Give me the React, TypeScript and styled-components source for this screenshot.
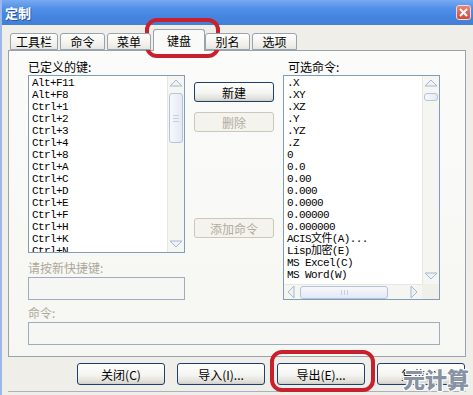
import React from 'react';
import styled, { createGlobalStyle } from 'styled-components';

const GlobalStyle = createGlobalStyle`
  html, body {
    margin: 0;
    padding: 0;
    background: #fff;
  }
  * {
    box-sizing: border-box;
  }
`;

const Window = styled.div`
  position: relative;
  width: 473px;
  height: 395px;
  overflow: hidden;
  display: flex;
  flex-direction: column;
  background: #efeee8;
  border-left: 2px solid #9cb8e8;
  font-family: "Noto Sans CJK SC", "Liberation Sans", sans-serif;
  font-size: 12px;
  color: #000;
`;

const TitleBar = styled.div`
  height: 25px;
  margin-left: -2px;
  flex: none;
  display: flex;
  align-items: center;
  justify-content: space-between;
  padding: 0 2px 0 5px;
  background: linear-gradient(to bottom, #78aaf0 0%, #4f8fe8 35%, #4484e0 70%, #427fd6 100%);
  color: #fff;
  font-weight: 700;
  font-size: 13px;
  text-shadow: 1px 1px 0 #2a5aa8;
`;

const CloseBox = styled.div`
  width: 15px;
  height: 15px;
  border: 1px solid #f3d8d4;
  border-radius: 3px;
  background: linear-gradient(to bottom, #e9857a, #cf4a3c);
  display: flex;
  align-items: center;
  justify-content: center;
`;

const Body = styled.div`
  flex: 1;
  display: flex;
  flex-direction: column;
  padding: 0 7px 0 6px;
`;

const TabRow = styled.div`
  height: 25px;
  display: flex;
  align-items: flex-end;
  gap: 2px;
  padding-left: 2px;
  position: relative;
  z-index: 1;
`;

const Tab = styled.div<{ $w: number; $active?: boolean }>`
  width: ${p => p.$w}px;
  height: ${p => (p.$active ? 22 : 17)}px;
  margin-right: ${p => (p.$active ? -2 : 0)}px;
  margin-bottom: ${p => (p.$active ? -1 : 0)}px;
  display: flex;
  align-items: center;
  justify-content: center;
  border: 1px solid #98a3ae;
  border-bottom: ${p => (p.$active ? 'none' : '1px solid #98a3ae')};
  border-radius: 3px 3px 0 0;
  background: ${p =>
    p.$active ? '#fafaf8' : 'linear-gradient(to bottom, #ffffff, #f1f0ec 70%, #e6e5df)'};
  font-size: 12px;
  line-height: 1;
`;

const Panel = styled.div`
  border: 1px solid #98a3ae;
  background: linear-gradient(to bottom, #fbfbfa, #f6f6f2);
  padding: 9px 25px 11px 19px;
  display: grid;
  grid-template-columns: 157px 80px 157px;
  column-gap: 9px;
`;

const Column = styled.div<{ $top?: number }>`
  display: flex;
  flex-direction: column;
  padding-top: ${p => p.$top ?? 0}px;
`;

const Label = styled.div<{ $off?: boolean; $gap?: number; $indent?: number }>`
  height: 14px;
  line-height: 14px;
  margin-top: ${p => p.$gap ?? 0}px;
  padding-left: ${p => p.$indent ?? 0}px;
  color: ${p => (p.$off ? '#aca899' : '#000')};
  white-space: nowrap;
`;

const WideRow = styled.div`
  grid-column: 1 / -1;
  display: flex;
  flex-direction: column;
`;

const ListBox = styled.div<{ $h: number }>`
  height: ${p => p.$h}px;
  margin-top: 1px;
  border: 1px solid #7f9db9;
  background: #fff;
  display: grid;
  grid-template-columns: 1fr 17px;
  grid-template-rows: 1fr auto;
  overflow: hidden;
`;

const Items = styled.div`
  overflow: hidden;
  padding: 1px 3px;
`;

const Item = styled.div`
  height: 12px;
  line-height: 12px;
  font-family: "Liberation Mono", "Noto Sans CJK SC", monospace;
  font-size: 11px;
  letter-spacing: -0.6px;
  white-space: nowrap;
`;

const VScroll = styled.div`
  display: flex;
  flex-direction: column;
  background: #f5f5f1;
  border-left: 1px solid #e8e8e3;
`;

const HScroll = styled.div`
  height: 15px;
  display: flex;
  align-items: center;
  background: #f5f5f1;
  border-top: 1px solid #e8e8e3;
`;

const Corner = styled.div`
  background: #f0efe9;
`;

const ArrowBtn = styled.div<{ $push?: boolean }>`
  width: 16px;
  height: 16px;
  flex: none;
  margin-top: ${p => (p.$push ? 'auto' : '0')};
  display: flex;
  align-items: center;
  justify-content: center;
`;

const Thumb = styled.div<{ $size: number; $horiz?: boolean }>`
  flex: none;
  ${p =>
    p.$horiz
      ? `width: ${p.$size}px; height: 13px;`
      : `height: ${p.$size}px; width: 14px; margin: 1px 0 0 1px;`}
  border: 1px solid #b4c2dc;
  border-radius: 3px;
  background: linear-gradient(${p => (p.$horiz ? 'to bottom' : 'to right')}, #f7f8fc, #e4e9f4);
  display: flex;
  flex-direction: ${p => (p.$horiz ? 'row' : 'column')};
  align-items: center;
  justify-content: center;
  gap: 2px;
`;

const Grip = styled.span<{ $horiz?: boolean }>`
  display: block;
  background: #c4cfe4;
  ${p => (p.$horiz ? 'width: 1px; height: 5px;' : 'width: 6px; height: 1px;')}
`;

const Track = styled.div`
  flex: 1;
`;

const Field = styled.div`
  height: 23px;
  margin-top: 2px;
  border: 1px solid #9eacbd;
  background: #f6f6f4;
`;

const Button = styled.div<{ $off?: boolean; $w?: number; $h?: number }>`
  width: ${p => p.$w ?? 80}px;
  height: ${p => p.$h ?? 20}px;
  flex: none;
  display: flex;
  align-items: center;
  justify-content: center;
  border: 1px solid ${p => (p.$off ? '#cac8bb' : '#1f3f6e')};
  border-radius: 3px;
  background: ${p =>
    p.$off
      ? '#f4f3ee'
      : 'linear-gradient(to bottom, #ffffff 0%, #f4f4f1 55%, #e2e1da 85%, #cfd2dc 100%)'};
  color: ${p => (p.$off ? '#b0ad9e' : '#000')};
  font-size: 12px;
  white-space: nowrap;
  box-shadow: ${p => (p.$off ? 'none' : 'inset 0 -1px 0 #d6d0c5')};
`;

const ButtonRow = styled.div`
  display: flex;
  justify-content: flex-end;
  gap: 12px;
  padding: 6px 1px 6px 0;
  border-bottom: 1px solid #a9b2c2;
`;

const Highlight = styled.div<{ $x: number; $y: number; $w: number; $h: number }>`
  position: absolute;
  left: ${p => p.$x}px;
  top: ${p => p.$y}px;
  width: ${p => p.$w}px;
  height: ${p => p.$h}px;
  border: 4px solid #c8202c;
  border-radius: 12px;
  pointer-events: none;
`;

const Watermark = styled.div`
  position: absolute;
  left: 401px;
  top: 362px;
  font-family: "Noto Sans CJK SC", sans-serif;
  font-size: 22px;
  font-weight: 900;
  color: #8792a2;
  text-shadow: -1px -1px 0 #fff, 1px -1px 0 #fff, -1px 1px 0 #fff, 1px 1px 0 #fff;
`;

type Dir = 'up' | 'down' | 'left' | 'right';

const Arrow: React.FC<{ dir: Dir }> = ({ dir }) => {
  const pts: Record<Dir, string> = {
    up: '2,10 8,4 14,10',
    down: '2,5 8,11 14,5',
    left: '10,2 4,8 10,14',
    right: '5,2 11,8 5,14',
  };
  return (
    <svg width="16" height="16" viewBox="0 0 16 16">
      <polygon points={pts[dir]} fill="#eef1f7" stroke="#a9b6cc" strokeWidth="1" />
    </svg>
  );
};

const leftKeys = [
  'Alt+F11', 'Alt+F8', 'Ctrl+1', 'Ctrl+2', 'Ctrl+3', 'Ctrl+4', 'Ctrl+8', 'Ctrl+A',
  'Ctrl+C', 'Ctrl+D', 'Ctrl+E', 'Ctrl+F', 'Ctrl+H', 'Ctrl+K', 'Ctrl+N',
];

const commands = [
  '.X', '.XY', '.XZ', '.Y', '.YZ', '.Z', '0', '0.0', '0.00', '0.000', '0.0000',
  '0.00000', '0.000000', 'ACIS文件(A)...', 'Lisp加密(E)', 'MS Excel(C)', 'MS Word(W)',
];

const tabs = [
  { label: '工具栏', w: 48 },
  { label: '命令', w: 45 },
  { label: '菜单', w: 44 },
  { label: '键盘', w: 52, active: true },
  { label: '别名', w: 45 },
  { label: '选项', w: 45 },
];

export default function App() {
  return (
    <>
      <GlobalStyle />
      <Window>
        <TitleBar>
          <span>定制</span>
          <CloseBox>
            <svg width="9" height="9" viewBox="0 0 9 9">
              <path d="M1 1 L8 8 M8 1 L1 8" stroke="#fff" strokeWidth="2" />
            </svg>
          </CloseBox>
        </TitleBar>
        <Body>
          <TabRow>
            {tabs.map(t => (
              <Tab key={t.label} $w={t.w} $active={t.active}>
                {t.label}
              </Tab>
            ))}
          </TabRow>
          <Panel>
            <Column>
              <Label>已定义的键:</Label>
              <ListBox $h={178}>
                <Items>
                  {leftKeys.map(k => (
                    <Item key={k}>{k}</Item>
                  ))}
                </Items>
                <VScroll>
                  <ArrowBtn><Arrow dir="up" /></ArrowBtn>
                  <Thumb $size={50}>
                    <Grip /><Grip /><Grip />
                  </Thumb>
                  <ArrowBtn $push><Arrow dir="down" /></ArrowBtn>
                </VScroll>
              </ListBox>
              <Label $off $gap={8}>请按新快捷键:</Label>
              <Field />
            </Column>
            <Column $top={22}>
              <Button>新建</Button>
              <Button $off style={{ marginTop: 10 }}>删除</Button>
              <Button $off style={{ marginTop: 86 }}>添加命令</Button>
            </Column>
            <Column>
              <Label $indent={5}>可选命令:</Label>
              <ListBox $h={225}>
                <Items>
                  {commands.map(c => (
                    <Item key={c}>{c}</Item>
                  ))}
                </Items>
                <VScroll>
                  <ArrowBtn><Arrow dir="up" /></ArrowBtn>
                  <Thumb $size={8} />
                  <ArrowBtn $push><Arrow dir="down" /></ArrowBtn>
                </VScroll>
                <HScroll>
                  <ArrowBtn><Arrow dir="left" /></ArrowBtn>
                  <Thumb $horiz $size={88}>
                    <Grip $horiz /><Grip $horiz /><Grip $horiz />
                  </Thumb>
                  <Track />
                  <ArrowBtn><Arrow dir="right" /></ArrowBtn>
                </HScroll>
                <Corner />
              </ListBox>
            </Column>
            <WideRow>
              <Label $off $gap={6}>命令:</Label>
              <Field />
            </WideRow>
          </Panel>
          <ButtonRow>
            <Button $w={88} $h={22}>关闭(C)</Button>
            <Button $w={88} $h={22}>导入(I)...</Button>
            <Button $w={88} $h={22}>导出(E)...</Button>
            <Button $w={88} $h={22}>复位(S)</Button>
          </ButtonRow>
        </Body>
        <Highlight $x={143} $y={18} $w={75} $h={40} />
        <Highlight $x={268} $y={350} $w={105} $h={42} />
        <Watermark>元计算</Watermark>
      </Window>
    </>
  );
}
